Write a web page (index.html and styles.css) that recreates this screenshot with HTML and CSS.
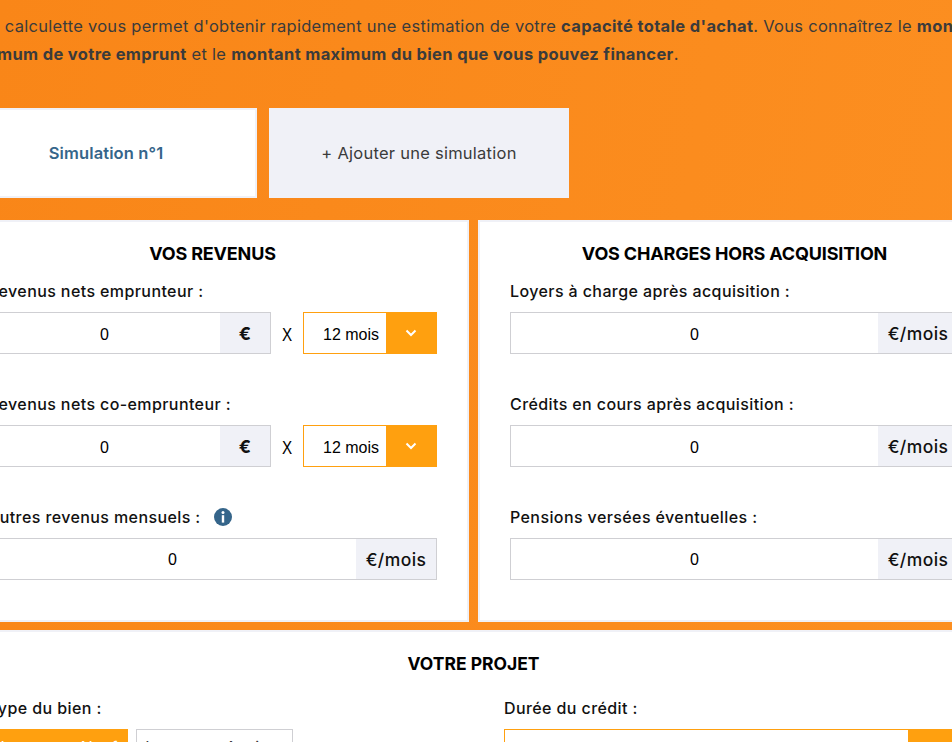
FILE: index.html
```html
<!DOCTYPE html>
<html lang="fr">
<head>
<meta charset="utf-8">
<title>Simulation capacité d'achat</title>
<link rel="stylesheet" href="styles.css">
</head>
<body>
<main class="page">
  <p class="intro">Cette calculette vous permet d'obtenir rapidement une estimation de votre <strong>capacité totale d'achat</strong>. Vous connaîtrez le <strong>montant<br>maximum de votre emprunt</strong> et le <strong>montant maximum du bien que vous pouvez financer</strong>.</p>

  <nav class="tabs">
    <button class="tab tab-active">Simulation n°1</button>
    <button class="tab">+ Ajouter une simulation</button>
  </nav>

  <div class="columns">
    <section class="panel">
      <h2 class="panel-title">VOS REVENUS</h2>
      <div class="field">
        <label class="label">Revenus nets emprunteur :</label>
        <div class="row">
          <div class="group group-short"><input class="input" value="0"><span class="addon addon-euro">€</span></div>
          <span class="times">X</span>
          <div class="select"><span class="select-value">12 mois</span><span class="select-arrow"><svg width="12" height="8" viewBox="0 0 12 8"><path d="M1.5 1.5 6 6 10.5 1.5" fill="none" stroke="#fff" stroke-width="2"/></svg></span></div>
        </div>
      </div>
      <div class="field">
        <label class="label">Revenus nets co-emprunteur :</label>
        <div class="row">
          <div class="group group-short"><input class="input" value="0"><span class="addon addon-euro">€</span></div>
          <span class="times">X</span>
          <div class="select"><span class="select-value">12 mois</span><span class="select-arrow"><svg width="12" height="8" viewBox="0 0 12 8"><path d="M1.5 1.5 6 6 10.5 1.5" fill="none" stroke="#fff" stroke-width="2"/></svg></span></div>
        </div>
      </div>
      <div class="field field-last">
        <label class="label">Autres revenus mensuels :<svg class="info" width="18" height="18" viewBox="0 0 18 18"><circle cx="9" cy="9" r="9" fill="#35658a"/><circle cx="9" cy="4.6" r="1.5" fill="#fff"/><rect x="7.8" y="7.2" width="2.4" height="7.4" fill="#fff"/></svg></label>
        <div class="group"><input class="input" value="0"><span class="addon">€/mois</span></div>
      </div>
    </section>

    <section class="panel">
      <h2 class="panel-title">VOS CHARGES HORS ACQUISITION</h2>
      <div class="field">
        <label class="label">Loyers à charge après acquisition :</label>
        <div class="group"><input class="input" value="0"><span class="addon">€/mois</span></div>
      </div>
      <div class="field">
        <label class="label">Crédits en cours après acquisition :</label>
        <div class="group"><input class="input" value="0"><span class="addon">€/mois</span></div>
      </div>
      <div class="field field-last">
        <label class="label">Pensions versées éventuelles :</label>
        <div class="group"><input class="input" value="0"><span class="addon">€/mois</span></div>
      </div>
    </section>
  </div>

  <section class="panel panel-wide">
    <h2 class="panel-title panel-title-wide">VOTRE PROJET</h2>
    <div class="project">
      <div>
        <label class="label">Type du bien :</label>
        <div class="choices">
          <button class="choice choice-on">Logement Neuf</button>
          <button class="choice">Logement Ancien</button>
        </div>
      </div>
      <div>
        <label class="label">Durée du crédit :</label>
        <div class="select select-wide"><span class="select-value"></span><span class="select-arrow"></span></div>
      </div>
    </div>
  </section>
</main>
</body>
</html>
```

FILE: styles.css
```css
html, body {
  margin: 0;
  height: 742px;
  overflow: hidden;
}

body {
  background: linear-gradient(100deg, #f98618 0%, #fc8f21 100%);
  font-family: Inter, "Liberation Sans", sans-serif;
  color: #000;
}

.page {
  width: 1033px;
  margin-left: -43px;
}

.intro {
  margin: 0;
  padding-top: 12px;
  height: 108px;
  font-size: 16.5px;
  letter-spacing: 0.275px;
  line-height: 28px;
  color: #3b3b3b;
  white-space: nowrap;
  box-sizing: border-box;
}

.intro strong {
  font-weight: 700;
  letter-spacing: 0.34px;
}

.tabs {
  display: flex;
  gap: 12px;
  margin-bottom: 22px;
}

.tab {
  width: 300px;
  height: 90px;
  border: 2px solid #f0f1f7;
  background: #f0f1f7;
  font-family: inherit;
  font-size: 16.5px;
  letter-spacing: 0.25px;
  color: #3b3b3b;
  padding: 0;
}

.tab-active {
  background: #fff;
  color: #35658a;
  font-weight: 600;
  letter-spacing: 0.12px;
  padding-right: 2px;
}

.columns {
  display: flex;
  gap: 9px;
  margin-bottom: 8px;
}

.panel {
  width: 512px;
  box-sizing: border-box;
  background: #fff;
  border: 2px solid #f0f1f7;
  padding: 18px 30px 40px 29px;
}

.panel + .panel {
  padding: 18px 29px 40px 30px;
}

.panel-wide {
  width: 1033px;
  padding: 18px 29px 40px;
}

.panel-title {
  margin: 0 0 11px;
  font-size: 18px;
  letter-spacing: -0.17px;
  line-height: 28px;
  font-weight: 700;
  text-align: center;
}

.panel-title-wide {
  font-size: 17.5px;
  letter-spacing: 0;
  margin-bottom: 18px;
}

.field {
  margin-bottom: 38px;
}

.field-last {
  margin-bottom: 0;
}

.field-last .input {
  padding-top: 2px;
}

.label {
  display: flex;
  align-items: center;
  height: 24px;
  margin-bottom: 9px;
  font-size: 16px;
  letter-spacing: 0.4px;
  font-weight: 500;
  white-space: nowrap;
  color: #111;
}

.info {
  margin-left: 13px;
  flex: none;
}

.row {
  display: flex;
  align-items: stretch;
}

.group {
  display: flex;
  height: 42px;
  box-sizing: border-box;
  border: 1px solid #cfcfd3;
}

.group-short {
  width: 283px;
}

.input {
  flex: 1;
  min-width: 0;
  border: 0;
  padding: 4px 0 0;
  outline: 0;
  background: #fff;
  text-align: center;
  font-family: "Liberation Sans", Arial, sans-serif;
  font-size: 16px;
  color: #000;
}

.addon {
  width: 80px;
  display: flex;
  align-items: center;
  justify-content: center;
  background: #f0f1f7;
  font-size: 17.5px;
  letter-spacing: 0.4px;
  font-weight: 500;
  color: #111;
}

.addon-euro {
  width: 50px;
  font-size: 18px;
  font-weight: 700;
}

.times {
  width: 32px;
  display: flex;
  align-items: center;
  justify-content: center;
  padding-top: 3px;
  box-sizing: border-box;
  font-family: "Liberation Sans", Arial, sans-serif;
  font-size: 19px;
  transform: scaleX(0.8);
}

.select {
  width: 134px;
  height: 42px;
  box-sizing: border-box;
  display: flex;
  border: 1px solid #ffa00f;
}

.select-wide {
  width: 455px;
}

.select-value {
  flex: 1;
  display: flex;
  align-items: center;
  padding: 4px 0 0 19px;
  font-family: "Liberation Sans", Arial, sans-serif;
  font-size: 16px;
}

.select-arrow {
  width: 50px;
  display: flex;
  align-items: center;
  justify-content: center;
  background: #ffa00f;
  padding-bottom: 1px;
  box-sizing: border-box;
}

.project {
  display: grid;
  grid-template-columns: 455px 455px;
  column-gap: 61px;
}

.choices {
  display: flex;
  gap: 8px;
}

.choice {
  width: 157px;
  height: 42px;
  box-sizing: border-box;
  border: 1px solid #cfcfd3;
  background: #fff;
  font-family: inherit;
  font-size: 16px;
  color: #3b3b3b;
  padding: 0 6px 7px 0;
}

.choice-on {
  width: 132px;
  margin-left: 8px;
  border-color: #ffa00f;
  background: #ffa00f;
  color: #fff;
}
```
